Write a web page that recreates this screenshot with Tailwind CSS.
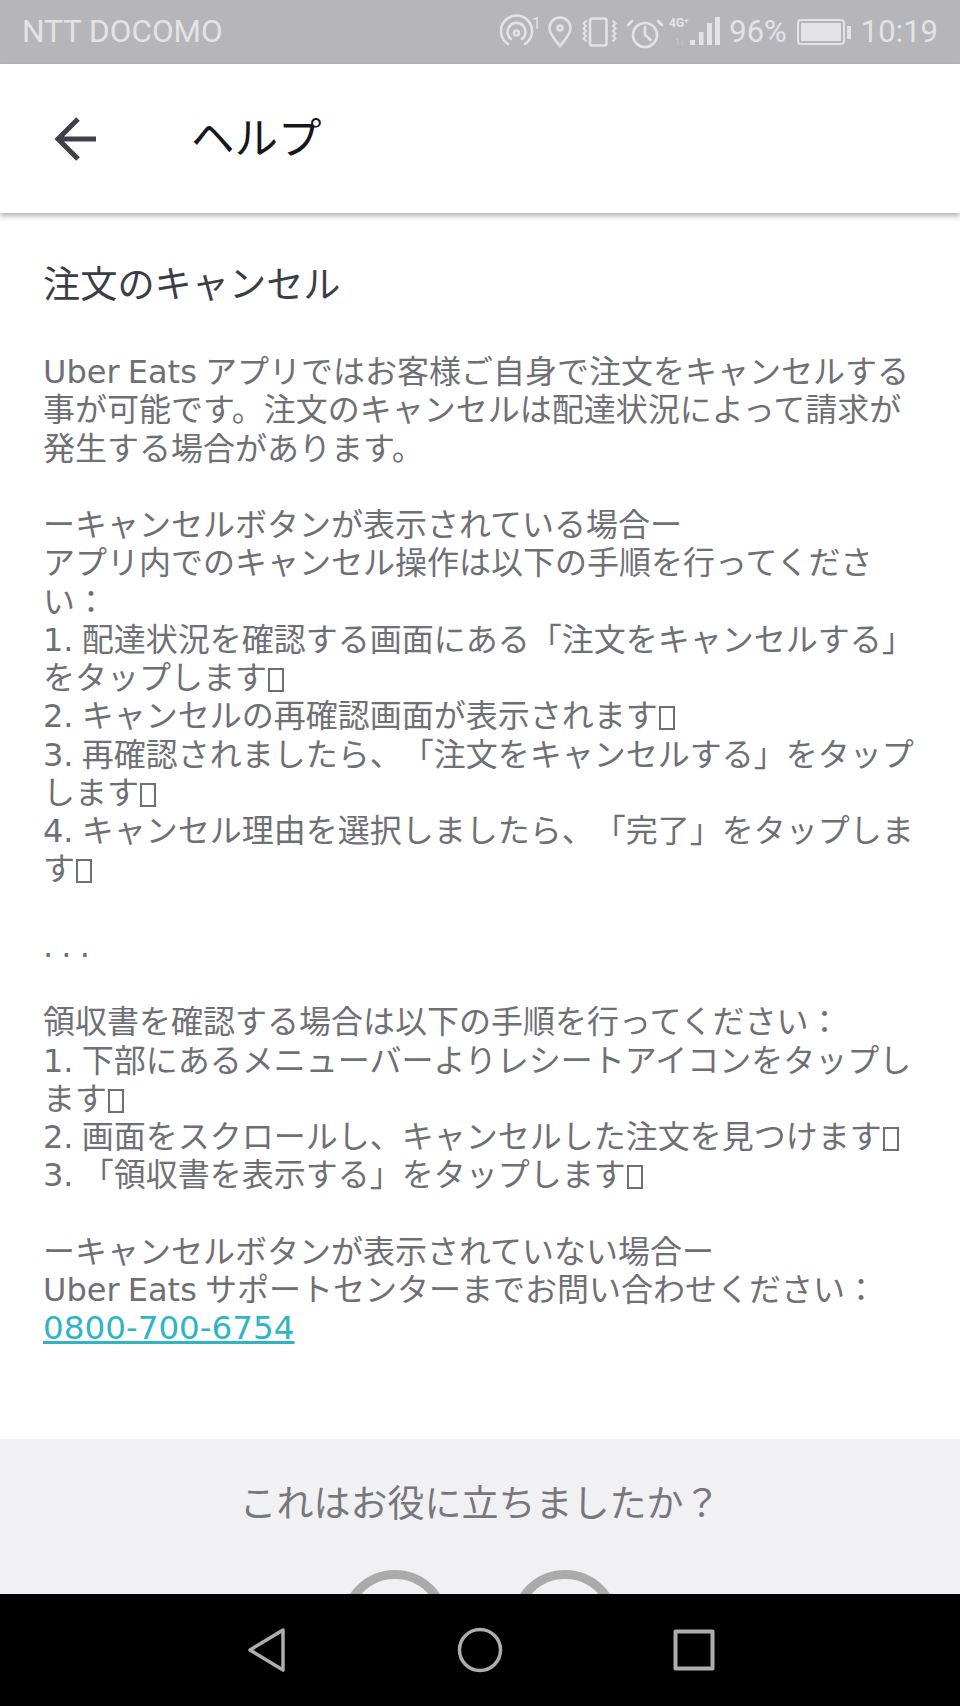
<!DOCTYPE html>
<html lang="ja"><head><meta charset="utf-8">
<script src="https://cdn.jsdelivr.net/npm/@tailwindcss/browser@4"></script>
</head>
<body class="bg-white">
<div class="w-[960px] h-[1706px] flex flex-col overflow-hidden font-['DejaVu_Sans','Noto_Sans_CJK_JP',sans-serif] [text-spacing-trim:space-all]">
  <div class="h-[64px] shrink-0 bg-[#b5b5ba] flex items-center justify-between pl-[22px] pr-[22px] text-[#e3e3e6]">
    <span class="text-[31.500px] font-['Roboto',sans-serif]">NTT DOCOMO</span>
    <div class="flex items-center font-['Roboto',sans-serif]">
      <svg width="226" height="40" viewBox="0 0 226 40" fill="none" stroke="#e3e3e6" stroke-width="2.6" stroke-linecap="round">
        <path d="M11 32a15.500 15.500 0 1 1 17 0"/><path d="M14 27a9 9 0 1 1 11 0"/><circle cx="19.500" cy="21" r="2.500"/>
        <text x="35" y="17" font-size="16" fill="#e3e3e6" stroke="none" font-family="Roboto">1</text>
        <path d="M63 34c-5-7-10.500-11-10.500-18a10.500 10.500 0 0 1 21 0c0 7-5.500 11-10.500 18z"/><circle cx="63" cy="16" r="2.500"/>
        <rect x="93" y="6.500" width="16.500" height="27" rx="2"/>
        <path d="M89 9l-2.500 2.500 2.500 2.500-2.500 2.500 2.500 2.500-2.500 2.500 2.500 2.500-2.500 2.500 2.500 2.500M116 9l2.500 2.500-2.500 2.500 2.500 2.500-2.500 2.500 2.500 2.500-2.500 2.500 2.500 2.500-2.500 2.500" stroke-width="2"/>
        <circle cx="148" cy="23" r="12"/><path d="M148 15v8l5.500 5M135 9l-4 4M161 9l4 4"/>
        <text x="172" y="15" font-size="12" font-weight="700" fill="#e3e3e6" stroke="none" font-family="Roboto">4G⁺</text>
        <text x="178" y="33" font-size="9" fill="#e3e3e6" fill-opacity="0.5" stroke="none" font-family="Roboto">1↓</text>
        <g fill="#e3e3e6" stroke="none"><rect x="193" y="28" width="5" height="5"/><rect x="202" y="20" width="4.500" height="13"/><rect x="210" y="11" width="5" height="22"/><rect x="218" y="5" width="5" height="28"/></g>
      </svg>
      <span class="text-[31px] ml-[6px]">96%</span>
      <div class="ml-[10px] w-[48px] h-[26px] border-2 border-[#e3e3e6] rounded-[4px] p-[2px]"><div class="w-full h-full bg-[#e3e3e6]"></div></div>
      <div class="w-[4px] h-[13px] bg-[#e3e3e6] ml-[2px]"></div>
      <span class="text-[31px] ml-[10px]">10:19</span>
    </div>
  </div>

  <div class="h-[149px] shrink-0 bg-white flex items-center shadow-[0_3px_5px_rgba(0,0,0,0.3)] relative z-10">
    <svg class="ml-[53px]" width="44" height="44" viewBox="0 0 44 44" fill="none" stroke="#3f3f4a" stroke-width="5">
      <path d="M43 22H5M25 2L5 22 25 42"/>
    </svg>
    <span class="ml-[94px] text-[43.500px] text-[#16161c] mt-[2px]">ヘルプ</span>
  </div>

  <div class="h-[1226px] shrink-0 px-[43px] pt-[50px] text-[#6f6f76]">
    <h1 class="text-[37.200px] leading-[44px] text-[#3d3d45] mb-[46px]">注文のキャンセル</h1>
    <p class="text-[32px] leading-[38.25px] whitespace-nowrap [word-spacing:-2px]">Uber Eats アプリではお客様ご自身で注文をキャンセルする<br>事が可能です。注文のキャンセルは配達状況によって請求が<br>発生する場合があります。<br><br>ーキャンセルボタンが表示されている場合ー<br>アプリ内でのキャンセル操作は以下の手順を行ってくださ<br>い：<br>1. 配達状況を確認する画面にある「注文をキャンセルする」<br>をタップします<span class="inline-block w-[16px] h-[24px] border-2 border-[#6f6f76] align-[-3px] ml-[1px]"></span><br>2. キャンセルの再確認画面が表示されます<span class="inline-block w-[16px] h-[24px] border-2 border-[#6f6f76] align-[-3px] ml-[1px]"></span><br>3. 再確認されましたら、「注文をキャンセルする」をタップ<br>します<span class="inline-block w-[16px] h-[24px] border-2 border-[#6f6f76] align-[-3px] ml-[1px]"></span><br>4. キャンセル理由を選択しましたら、「完了」をタップしま<br>す<span class="inline-block w-[16px] h-[24px] border-2 border-[#6f6f76] align-[-3px] ml-[1px]"></span><br><br>. . .<br><br>領収書を確認する場合は以下の手順を行ってください：<br>1. 下部にあるメニューバーよりレシートアイコンをタップし<br>ます<span class="inline-block w-[16px] h-[24px] border-2 border-[#6f6f76] align-[-3px] ml-[1px]"></span><br>2. 画面をスクロールし、キャンセルした注文を見つけます<span class="inline-block w-[16px] h-[24px] border-2 border-[#6f6f76] align-[-3px] ml-[1px]"></span><br>3. 「領収書を表示する」をタップします<span class="inline-block w-[16px] h-[24px] border-2 border-[#6f6f76] align-[-3px] ml-[1px]"></span><br><br>ーキャンセルボタンが表示されていない場合ー<br>Uber Eats サポートセンターまでお問い合わせください：<br><a class="text-[32.600px] text-[#2fb4c4] underline">0800-700-6754</a></p>
  </div>

  <div class="flex-1 min-h-0 bg-[#f1f1f3] overflow-hidden flex flex-col items-center">
    <p class="mt-[41px] text-[37px] leading-[50px] text-[#77777e]">これはお役に立ちましたか？</p>
    <div class="mt-[40px] flex gap-[62px]">
      <div class="w-[108px] h-[108px] rounded-full border-[9px] border-[#ababab] shrink-0"></div>
      <div class="w-[108px] h-[108px] rounded-full border-[9px] border-[#ababab] shrink-0"></div>
    </div>
  </div>

  <div class="h-[112px] shrink-0 bg-black relative">
    <svg class="block" width="960" height="112" viewBox="0 0 960 112" fill="none" stroke="#adadad" stroke-width="3.5" stroke-linejoin="round">
      <path d="M283 36L250 56 283 76z"/>
      <circle cx="480" cy="56" r="20.500"/>
      <rect x="675.500" y="37.500" width="37" height="37" stroke-width="4"/>
    </svg>
  </div>
</div>
</body></html>
